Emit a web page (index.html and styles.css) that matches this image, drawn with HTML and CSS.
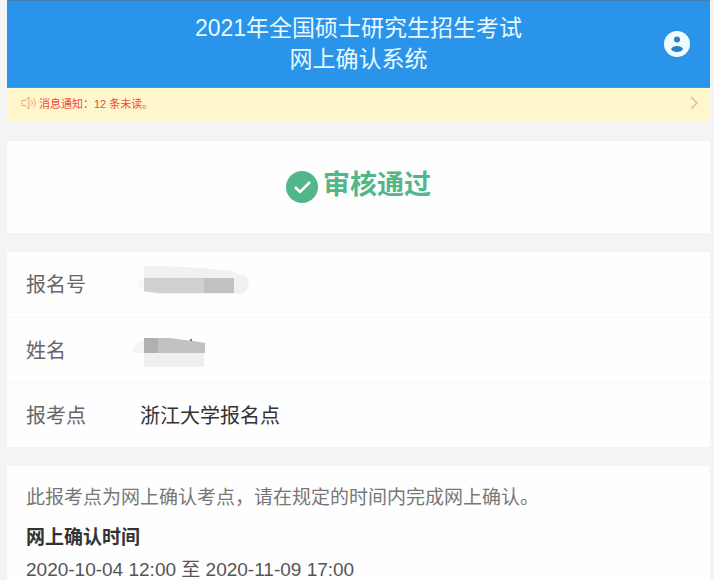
FILE: index.html
```html
<!DOCTYPE html>
<html lang="zh-CN">
<head>
	<meta charset="utf-8">
	<meta name="viewport" content="width=device-width, initial-scale=1">
	<title>网上确认系统</title>
	<link rel="stylesheet" href="styles.css">
</head>
<body>
<header class="header">
	<h1>2021年全国硕士研究生招生考试<br>网上确认系统</h1>
	<button class="user" type="button" aria-label="个人中心">
		<svg width="26" height="26" viewBox="0 0 26 26">
			<circle cx="13" cy="13" r="13" fill="#effbff"/>
			<circle cx="13" cy="8.500" r="3" fill="#2a7fc4"/>
			<path d="M7 18c1-2 3-3 6-3s5 1 6 3c-1 2-3 3-6 3s-5-1-6-3z" fill="#2a7fc4"/>
		</svg>
	</button>
</header>

<a class="notice" href="#">
	<svg width="16" height="14" viewBox="0 0 16 14" fill="none" stroke="#f0a080">
		<path d="M1 4.500h3l4-3.500v12l-4-3.500h-3z"/>
		<path d="M10.500 4.500q2 2.500 0 5M12.500 2.500q3.500 4.500 0 9"/>
	</svg>
	<span>消息通知：12 条未读。</span>
	<svg class="arrow" width="8" height="14" viewBox="0 0 8 14" fill="none" stroke="#e5b896" stroke-width="1.500">
		<path d="M1 1l6 6-6 6"/>
	</svg>
</a>

<main>
	<section class="card status">
		<svg width="32" height="32" viewBox="0 0 32 32">
			<circle cx="16" cy="16" r="16" fill="#52b788"/>
			<path d="M9 16l5 5 10-10" fill="none" stroke="#fff" stroke-width="2.500"/>
		</svg>
		<h2>审核通过</h2>
	</section>

	<dl class="card info">
		<div class="row">
			<dt>报名号</dt>
			<dd>
				<svg class="mask" width="120" height="36" viewBox="0 0 120 36" aria-label="已隐藏">
					<path d="M12 0h17l43 2 26 3 15 5 4 5-2 9-5 4H27l-15-2z" fill="#f1f1f1"/>
					<path d="M4 17l4-4h4v10l-6-2z" fill="#f9f9f9"/>
					<path d="M12 12h60v15H27l-15-2z" fill="#d0d0d0"/>
					<path d="M72 12h30v15H72z" fill="#c1c1c1"/>
				</svg>
			</dd>
		</div>
		<div class="row">
			<dt>姓名</dt>
			<dd>
				<svg class="mask" width="120" height="36" viewBox="0 0 120 36" aria-label="已隐藏">
					<path d="M0 21l3-8 9-3v12H1z" fill="#f4f4f4"/>
					<path d="M12 22h60v14H12z" fill="#eeefee"/>
					<path d="M12 7h25l24 3 12 2v10H12z" fill="#c1c1c1"/>
					<path d="M12 7h14v15H12z" fill="#b0b0b0"/>
					<path d="M58 8h2v2h-2z" fill="#777"/>
				</svg>
			</dd>
		</div>
		<div class="row">
			<dt>报考点</dt>
			<dd>浙江大学报名点</dd>
		</div>
	</dl>

	<section class="card detail">
		<p class="tip">此报考点为网上确认考点，请在规定的时间内完成网上确认。</p>
		<h3>网上确认时间</h3>
		<p>2020-10-04 12:00 至 2020-11-09 17:00</p>
	</section>
</main>
</body>
</html>
```
FILE: styles.css
```css
* {
	margin: 0;
	padding: 0;
	box-sizing: border-box;
}

body {
	padding: 0 4px 0 7px;
	background: #f4f4f4;
	color: #333;
	font-family: "Liberation Sans", "Noto Sans CJK SC", sans-serif;
	font-size: 19px;
}

svg {
	display: block;
	flex: none;
}

.header {
	display: grid;
	grid-template-columns: 46px 1fr 46px;
	align-items: center;
	padding: 12px 0;
	border-top: 1px solid #3d80b8;
	border-bottom: 1px solid #5a9aa8;
	background: #2a93ea;
}

.header h1 {
	grid-column: 2;
	color: #e8faff;
	font-size: 23px;
	font-weight: normal;
	line-height: 31px;
	text-align: center;
}

.user {
	border: none;
	background: none;
	cursor: pointer;
}

.notice {
	display: flex;
	align-items: center;
	gap: 2px;
	height: 34px;
	padding: 0 12px 4px 14px;
	background: #fff6cc;
	color: #f04a3c;
	font-size: 11px;
	text-decoration: none;
}

.arrow {
	margin-left: auto;
}

.card {
	margin-top: 19px;
	background: #fefefe;
}

.status {
	display: flex;
	align-items: center;
	justify-content: center;
	gap: 5px;
	height: 92px;
}

.status h2 {
	color: #52b788;
	font-size: 27px;
	line-height: 32px;
	padding-bottom: 4px;
}

.row {
	display: flex;
	align-items: center;
	height: 65px;
	padding: 0 19px 2px;
	font-size: 20px;
}

.row + .row {
	border-top: 1px solid #f6f6f6;
}

.row dt {
	width: 114px;
	color: #666;
}

.mask {
	margin-left: -8px;
}

.detail {
	padding: 12px 19px;
}

.detail p,
.detail h3 {
	font-size: 19px;
	line-height: 32px;
}

.detail p {
	color: #555;
}

.detail .tip {
	margin-bottom: 4px;
	line-height: 40px;
	color: #777;
}
```
